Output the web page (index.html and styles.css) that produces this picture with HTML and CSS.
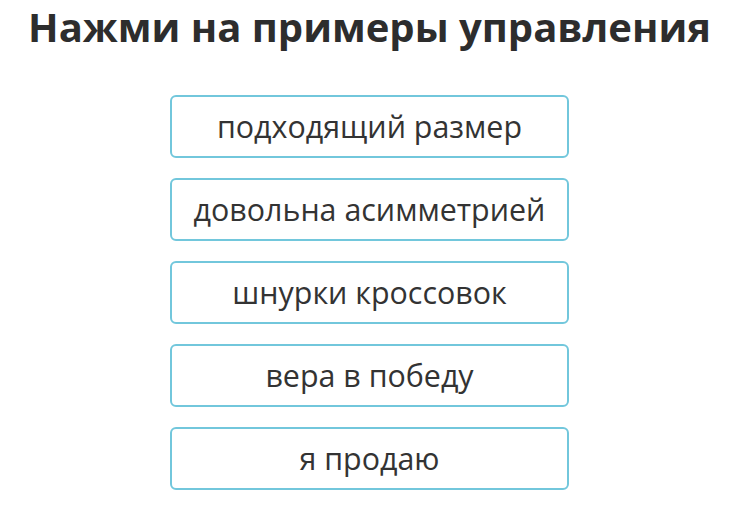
FILE: index.html
```html
<!DOCTYPE html>
<html>
<head>
<title>Нажми на примеры управления</title>
<meta charset='utf-8'/>
<link rel="stylesheet" href="styles.css">
</head>
<body>
<div class='quiz'>
	<h1 class='title'>Нажми на примеры управления</h1>
	<div class='options'>
		<a href='#' class='option'>подходящий размер</a>
		<a href='#' class='option'>довольна асимметрией</a>
		<a href='#' class='option'>шнурки кроссовок</a>
		<a href='#' class='option'>вера в победу</a>
		<a href='#' class='option'>я продаю</a>
	</div>
</div>
</body>
</html>
```

FILE: styles.css
```css
body {
	margin: 0;
	background: #fff;
	font-family: "Open Sans", "Noto Sans", sans-serif;
	color: #333;
}
.quiz {
	display: flex;
	flex-direction: column;
	align-items: center;
	padding-left: 4px;
}
.title {
	margin: 0;
	font-size: 40px;
	line-height: 54px;
	font-weight: 700;
	color: #2d2d2d;
}
.options {
	display: flex;
	flex-direction: column;
	gap: 20px;
	margin-top: 41px;
}
.option {
	box-sizing: border-box;
	width: 399px;
	height: 63px;
	display: flex;
	align-items: center;
	justify-content: center;
	border: 2px solid #72c7dc;
	border-radius: 6px;
	font-size: 30.4px;
	color: #333;
	text-decoration: none;
}
```
